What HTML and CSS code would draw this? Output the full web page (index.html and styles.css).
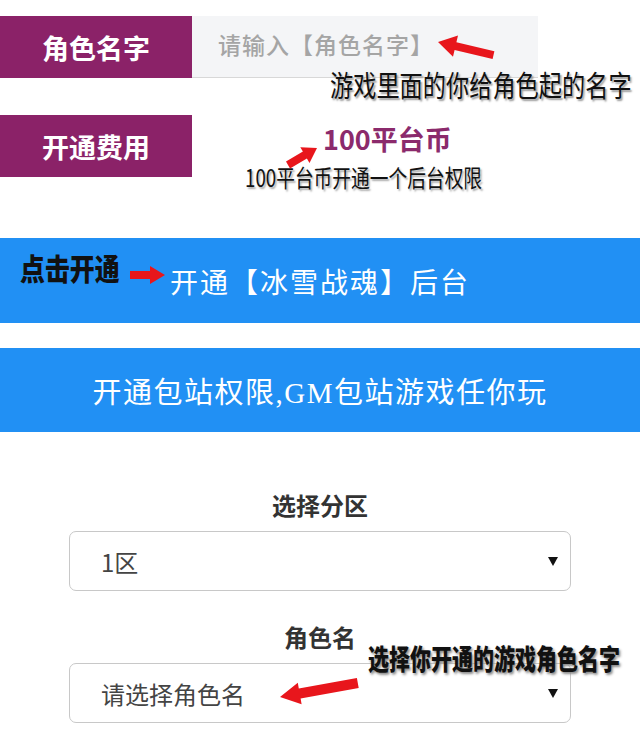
FILE: index.html
```html
<!DOCTYPE html>
<html lang="zh-CN">
  <head>
    <meta charset="UTF-8" />
    <meta name="viewport" content="width=device-width, initial-scale=1.0" />
    <title>开通后台</title>
    <link rel="stylesheet" href="styles.css">
  </head>
  <body>
    <div class="page">
      <!-- Role name input -->
      <div class="row">
        <div class="tag">角色名字</div>
        <div class="input">请输入【角色名字】</div>
      </div>

      <!-- Price -->
      <div class="row row-price">
        <div class="tag">开通费用</div>
        <div class="price">100平台币</div>
      </div>

      <!-- Buttons -->
      <div class="btn">开通【冰雪战魂】后台</div>
      <div class="btn btn-second">开通包站权限,GM包站游戏任你玩</div>

      <!-- Server / role selects -->
      <div class="field">
        <div class="field-label">选择分区</div>
        <div class="select"><span>1区</span><span class="caret"></span></div>
      </div>
      <div class="field field-role">
        <div class="field-label">角色名</div>
        <div class="select"><span>请选择角色名</span><span class="caret"></span></div>
      </div>

      <!-- Annotations drawn over the screenshot -->
      <div class="note note-name"><span>游戏里面的你给角色起的名字</span></div>
      <div class="note note-price"><span>100平台币开通一个后台权限</span></div>
      <div class="note note-click"><span>点击开通</span></div>
      <div class="note note-role"><span>选择你开通的游戏角色名字</span></div>

      <svg class="arrow arrow-name" width="70" height="36" viewBox="0 0 70 36">
        <polygon points="8,14 28,7.4 26.4,14.2 64.4,23.2 62.6,31 24.6,22 23,28.8" />
      </svg>
      <svg class="arrow arrow-price" width="45" height="32" viewBox="0 0 45 32">
        <polygon points="37,8 29.5,22.9 26.9,18.6 10,28.5 6,21.5 22.9,11.6 20.3,7.3" />
      </svg>
      <svg class="arrow arrow-click" width="40" height="20" viewBox="0 0 40 20">
        <polygon points="2,6 22,6 22,1 37,10 22,19 22,14 2,14" />
      </svg>
      <svg class="arrow arrow-role" width="90" height="36" viewBox="0 0 90 36">
        <polygon points="5,27 22.8,12.7 23.8,18.6 81.9,8.1 83.7,17.9 25.6,28.4 26.6,34.3" />
      </svg>
    </div>
  </body>
</html>
```

FILE: styles.css
```css
/* Page basics */
body {
  margin: 0;
  background: #fff;
  font-family: "Noto Sans CJK SC", sans-serif;
}

.page {
  position: relative;
  width: 640px;
  height: 742px;
  overflow: hidden;
}

/* Purple label + input rows */
.row {
  display: flex;
  height: 62px;
  margin-top: 16px;
}

.row-price {
  margin-top: 37px;
}

.tag {
  width: 192px;
  background: #8b2268;
  color: #fff;
  font-size: 27px;
  font-weight: bold;
  display: flex;
  align-items: center;
  justify-content: center;
}

.input {
  width: 320px;
  background: #f4f5f7;
  border-bottom: 1px solid #d8d8d8;
  color: #a5a5a5;
  font-size: 23px;
  font-weight: 500;
  letter-spacing: 1px;
  padding-left: 26px;
  padding-bottom: 5px;
  display: flex;
  align-items: center;
}

.price {
  color: #8b2a6c;
  font-size: 27px;
  font-weight: bold;
  line-height: 1;
  padding-left: 131px;
  margin-top: 10px;
}

/* Blue buttons */
.btn {
  height: 85px;
  margin-top: 61px;
  background: #2190f4;
  color: #fff;
  font-size: 28px;
  letter-spacing: 2px;
  display: flex;
  align-items: center;
  justify-content: center;
}

.btn-second {
  height: 84px;
  margin-top: 25px;
  font-size: 29px;
  letter-spacing: 1.5px;
  font-family: "Liberation Serif", "Noto Sans CJK SC", serif;
}

/* Select fields */
.field {
  margin-top: 56px;
  display: flex;
  flex-direction: column;
  align-items: center;
}

.field-role {
  margin-top: 29px;
}

.field-label {
  color: #333;
  font-size: 24px;
  font-weight: bold;
  line-height: 34px;
  margin-bottom: 9px;
}

.select {
  box-sizing: border-box;
  width: 502px;
  height: 60px;
  border: 1px solid #c8c8c8;
  border-radius: 7px;
  padding: 0 12px 0 31px;
  color: #444;
  font-size: 24px;
  display: flex;
  align-items: center;
  justify-content: space-between;
}

.caret {
  width: 0;
  height: 0;
  border-left: 5px solid transparent;
  border-right: 5px solid transparent;
  border-top: 9px solid #111;
}

/* Annotations */
.note {
  position: absolute;
  line-height: 1;
  white-space: nowrap;
  color: #111;
}

.note span {
  display: inline-block;
  transform-origin: 0 0;
}

.note-name {
  left: 330px;
  top: 70px;
  font-size: 29px;
  text-shadow: 2px 2px 2px #999;
}

.note-name span {
  transform: scaleX(0.8);
}

.note-price {
  left: 245px;
  top: 165px;
  font-size: 24px;
  text-shadow: 2px 2px 2px #aaa;
}

.note-price span {
  transform: scaleX(0.78);
}

.note-click {
  left: 20px;
  top: 252px;
  font-size: 30px;
  font-weight: 900;
}

.note-click span {
  transform: scaleX(0.83);
}

.note-role {
  left: 368px;
  top: 644px;
  font-size: 28px;
  font-weight: 900;
  text-shadow: 2px 2px 3px #888;
}

.note-role span {
  transform: scaleX(0.75);
}

/* Red arrows */
.arrow {
  position: absolute;
  fill: #e8161c;
}

.arrow-name {
  left: 430px;
  top: 28px;
}

.arrow-price {
  left: 280px;
  top: 140px;
}

.arrow-click {
  left: 128px;
  top: 265px;
}

.arrow-role {
  left: 275px;
  top: 670px;
}
```
